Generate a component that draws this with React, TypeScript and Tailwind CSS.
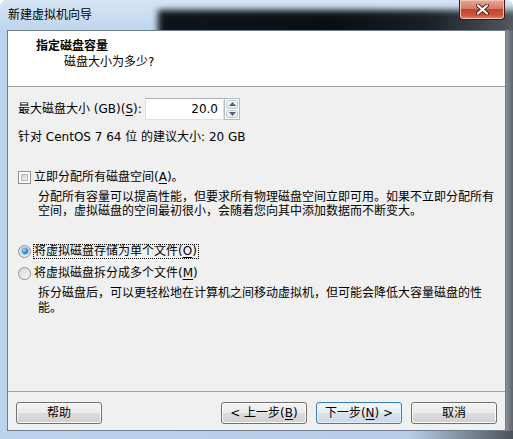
import React from "react";

const WinButton = ({
  children,
  primary = false,
}: {
  children: React.ReactNode;
  primary?: boolean;
}) => (
  <button
    className={`w-[86px] h-[22px] rounded-[3px] border text-[12px] leading-[14px] text-black flex items-center justify-center ${
      primary
        ? "border-[#3c7fb1] bg-[linear-gradient(#f1f6fa,#e8eef4_50%,#d9e3ec_50%,#cdd9e4)] shadow-[inset_0_0_0_1px_#dff1fb]"
        : "border-[#707070] bg-[linear-gradient(#f2f2f2,#ebebeb_50%,#dddddd_50%,#cfcfcf)] shadow-[inset_0_0_0_1px_#fbfbfb]"
    }`}
  >
    {children}
  </button>
);

const Radio = ({ checked = false }: { checked?: boolean }) => (
  <div className="w-[13px] h-[13px] shrink-0 rounded-full border border-[#8e8f8f] bg-[linear-gradient(135deg,#d4d7dc,#f7f7f7)] flex items-center justify-center">
    {checked && (
      <div className="w-[6px] h-[6px] rounded-full bg-[radial-gradient(circle_at_35%_35%,#a9d6f7,#2f7ad0_60%,#174c8e)] shadow-[0_0_1px_1px_#8cc2ee]" />
    )}
  </div>
);

const Checkbox = () => (
  <div className="w-[13px] h-[13px] shrink-0 border border-[#8e8f8f] bg-white p-[2px]">
    <div className="w-full h-full border border-[#b4b8bd] bg-[linear-gradient(135deg,#cbcfd5,#f6f6f6)]" />
  </div>
);

const Spinner = () => (
  <div className="w-[16px] h-[22px] flex flex-col border border-[#b6bcc6] bg-white p-[1px] gap-[1px]">
    <div className="flex-1 flex items-center justify-center rounded-[2px] border border-[#c6ccd4] bg-[linear-gradient(#f7f8fa,#e3e7ec)]">
      <svg width="7" height="4" viewBox="0 0 7 4">
        <path d="M0 4 L3.5 0 L7 4 Z" fill="#4d6185" />
      </svg>
    </div>
    <div className="flex-1 flex items-center justify-center rounded-[2px] border border-[#c6ccd4] bg-[linear-gradient(#f7f8fa,#e3e7ec)]">
      <svg width="7" height="4" viewBox="0 0 7 4">
        <path d="M0 0 L7 0 L3.5 4 Z" fill="#4d6185" />
      </svg>
    </div>
  </div>
);

export default function App() {
  return (
    <div className="w-[513px] h-[439px] flex flex-col overflow-hidden rounded-t-[7px] bg-[#bcd3ec] text-black [font-family:'DejaVu_Sans','Noto_Sans_CJK_SC',sans-serif] text-[12px]">
      {/* title bar */}
      <div className="relative h-[30px] shrink-0 flex justify-between overflow-hidden bg-[linear-gradient(#d6e5f5,#bfd5ee)]">
        <div className="absolute left-[158px] right-[-30px] top-[10px] h-[32px] blur-[3px] bg-[linear-gradient(to_right,#10151c,#0b0f14_45%,#1a1f26_70%,#474d54_88%,#6b7077)]" />
        <span className="relative self-center pl-[8px] leading-[16px]">新建虚拟机向导</span>
        <div className="relative self-start mr-[8px] w-[46px] h-[20px] rounded-b-[4px] border border-t-0 border-[#471414] bg-[linear-gradient(#e8a797,#d57b6a_45%,#c2442f_50%,#cf553b_80%,#e48a6c)] shadow-[inset_0_0_0_1px_#f3c4b6] flex items-center justify-center">
          <svg width="13" height="11" viewBox="0 0 13 11">
            <path d="M2 1.5 L11 9.5 M11 1.5 L2 9.5" stroke="#5a1a12" strokeWidth="4" strokeLinecap="round" />
            <path d="M2 1.5 L11 9.5 M11 1.5 L2 9.5" stroke="#ffffff" strokeWidth="2.2" strokeLinecap="round" />
          </svg>
        </div>
      </div>

      <div className="flex h-[401px] shrink-0">
        <div className="w-[7px] bg-[#bcd3ec]" />

        {/* client area */}
        <div className="w-[499px] flex flex-col border border-[#6e7d8e] bg-[#f0f0f0]">
          {/* header */}
          <div className="h-[56px] shrink-0 bg-white border-b border-[#a0a0a0] pt-[7px]">
            <div className="pl-[28px] leading-[16px] font-bold">指定磁盘容量</div>
            <div className="pl-[56px] leading-[16px]">磁盘大小为多少?</div>
          </div>

          {/* body */}
          <div className="flex-1 px-[10px] pt-[11px]">
            <div className="flex items-center h-[22px]">
              <span className="w-[127px] leading-[16px]">
                最大磁盘大小 (GB)(<u className="underline-offset-2">S</u>):
              </span>
              <div className="w-[79px] h-[22px] border border-[#dbdfe6] border-t-[#abadb3] bg-white flex items-center justify-end pr-[5px]">
                20.0
              </div>
              <Spinner />
            </div>
            <div className="mt-[9px] leading-[16px]">针对 CentOS 7 64 位 的建议大小: 20 GB</div>

            <div className="mt-[24px] flex items-center h-[16px] gap-[3px]">
              <Checkbox />
              <span className="leading-[16px]">
                立即分配所有磁盘空间(<u className="underline-offset-2">A</u>)。
              </span>
            </div>
            <p className="mt-[5px] ml-[20px] w-[458px] leading-[14px]">
              分配所有容量可以提高性能，但要求所有物理磁盘空间立即可用。如果不立即分配所有空间，虚拟磁盘的空间最初很小，会随着您向其中添加数据而不断变大。
            </p>

            <div className="mt-[25px] flex items-center h-[16px] gap-[2px]">
              <Radio checked />
              <span className="border border-dotted border-black leading-[13px] pr-[1px]">
                将虚拟磁盘存储为单个文件(<u className="underline-offset-2">O</u>)
              </span>
            </div>
            <div className="mt-[6px] flex items-center h-[16px] gap-[2px]">
              <Radio />
              <span className="border border-transparent leading-[13px]">
                将虚拟磁盘拆分成多个文件(<u className="underline-offset-2">M</u>)
              </span>
            </div>
            <p className="mt-[5px] ml-[20px] w-[458px] leading-[15px]">
              拆分磁盘后，可以更轻松地在计算机之间移动虚拟机，但可能会降低大容量磁盘的性能。
            </p>
          </div>

          {/* footer */}
          <div className="h-[39px] shrink-0 border-t border-[#a0a0a0] pt-[10px] pl-[8px] pr-[8px] flex justify-between">
            <WinButton>帮助</WinButton>
            <div className="flex gap-[9px]">
              <WinButton>
                &lt; 上一步(<u className="underline-offset-2">B</u>)
              </WinButton>
              <WinButton primary>
                下一步(<u className="underline-offset-2">N</u>) &gt;
              </WinButton>
              <WinButton>取消</WinButton>
            </div>
          </div>
        </div>

        <div className="w-[7px] bg-[linear-gradient(to_right,#8c9197,#5e6369)]" />
      </div>

      {/* bottom frame */}
      <div className="h-[8px] shrink-0 bg-[linear-gradient(to_right,#bcd3ec,#b6cde6_80%,#4c5157)]" />
    </div>
  );
}
